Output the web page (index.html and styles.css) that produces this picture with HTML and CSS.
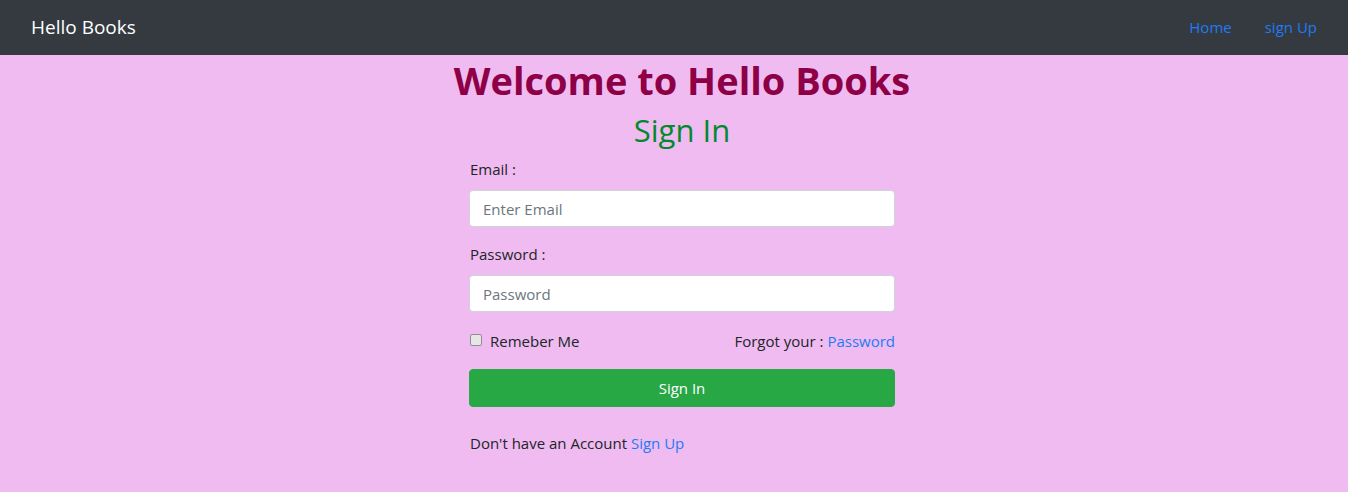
FILE: index.html
```html
<!DOCTYPE html>
<html lang="en">
<head>
<meta charset="utf-8">
<title>Hello Books</title>
<link rel="stylesheet" href="styles.css">
</head>
<body>
<nav class="navbar">
  <a class="brand" href="#">Hello Books</a>
  <div class="nav-links">
    <a class="nav-link" href="#">Home</a>
    <a class="nav-link" href="#">sign Up</a>
  </div>
</nav>
<main class="main">
  <h1 class="title">Welcome to Hello Books</h1>
  <h2 class="subtitle">Sign In</h2>
  <form class="form">
    <label class="label" for="email">Email :</label>
    <input class="input" id="email" type="email" placeholder="Enter Email">
    <label class="label" for="pw">Password :</label>
    <input class="input" id="pw" type="password" placeholder="Password">
    <div class="row">
      <label class="check"><input type="checkbox" class="checkbox"> Remeber Me</label>
      <span>Forgot your : <a href="#" class="link">Password</a></span>
    </div>
    <button type="button" class="btn">Sign In</button>
    <p class="footer-text">Don't have an Account <a href="#" class="link">Sign Up</a></p>
  </form>
</main>
</body>
</html>
```
FILE: styles.css
```css
* { box-sizing: border-box; }
html, body { margin: 0; padding: 0; }
body {
  font-family: "Open Sans", "Noto Sans", sans-serif;
  font-size: 16px;
  line-height: 1.5;
  color: #212529;
  background: #f0bbf0;
  min-height: 492px;
}
.navbar {
  height: 55px;
  background: #343a40;
  display: flex;
  align-items: center;
  justify-content: space-between;
  padding: 0 31px;
}
.brand {
  color: #fff;
  text-decoration: none;
  font-size: 19px;
}
.nav-links { display: flex; gap: 33px; }
.nav-link {
  color: #1e7bf5;
  text-decoration: none;
  font-size: 15px;
}
.main {
  display: flex;
  flex-direction: column;
  align-items: center;
  padding-left: 16px;
}
.title {
  margin: 0;
  margin-top: 1px;
  font-size: 38px;
  line-height: 48px;
  font-weight: 700;
  color: #8e0046;
}
.subtitle {
  margin: 0;
  font-size: 31px;
  line-height: 52px;
  font-weight: 500;
  color: #008a2c;
}
.form {
  width: 426px;
  display: flex;
  flex-direction: column;
}
.label {
  font-size: 15px;
  line-height: 24px;
  margin: 1px 0 9px 1px;
}
.input {
  height: 37px;
  border: 1px solid #ced4da;
  border-radius: 4px;
  background: #fff;
  padding: 0 13px;
  font: inherit;
  font-size: 15px;
  color: #495057;
  margin-bottom: 14px;
}
.input::placeholder { color: #6c757d; }
.row {
  display: flex;
  justify-content: space-between;
  align-items: center;
  font-size: 15px;
  line-height: 24px;
  margin-top: 3px;
  margin-bottom: 16px;
}
.check { display: flex; align-items: center; gap: 8px; }
.checkbox {
  -webkit-appearance: none;
  appearance: none;
  margin: 0 0 2px 1px;
  width: 12px;
  height: 12px;
  border: 1px solid #8f8f8f;
  border-radius: 2px;
  background: #e6e6e6;
}
.link { color: #1e7bf5; text-decoration: none; }
.btn {
  height: 38px;
  background: #28a745;
  border: 1px solid #28a745;
  border-radius: 4px;
  color: #fff;
  font: inherit;
  font-size: 15px;
}
.footer-text {
  margin: 24px 0 0 1px;
  font-size: 15px;
  line-height: 24px;
}
```
